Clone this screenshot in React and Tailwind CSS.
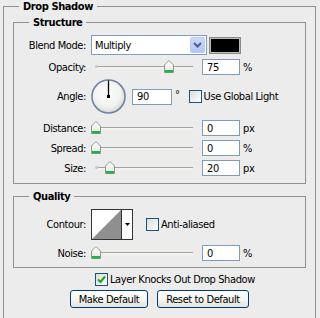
import React from "react";

function Thumb({ left }) {
  return (
    <svg
      className="absolute top-[1px]"
      style={{ left: `${left}px` }}
      width="10"
      height="13"
      viewBox="0 0 10 13"
    >
      <defs>
        <linearGradient id="tg" x1="0" y1="0" x2="0" y2="1">
          <stop offset="0" stopColor="#ffffff" />
          <stop offset="1" stopColor="#e6e6e0" />
        </linearGradient>
      </defs>
      <path d="M0.5 5 L5 0.5 L9.5 5 L9.5 12.5 L0.5 12.5 Z" fill="url(#tg)" stroke="#8e9a8e" />
      <rect x="1" y="10" width="8" height="2.5" fill="#22b14c" />
    </svg>
  );
}

function Slider({ thumb, dot }) {
  return (
    <div className="relative ml-[4px] w-[98px] h-[16px] flex items-center">
      <div className="w-full h-[3px] border-t border-[#a3a3a3] bg-[#f4f2ea] rounded-l-[2px]" />
      {dot && <div className="absolute left-0 top-[6px] w-[3px] h-[3px] rounded-full bg-[#c8c8c8]" />}
      <Thumb left={thumb} />
    </div>
  );
}

function Field({ value, w = "w-[38px]" }) {
  return (
    <div className={`${w} h-[16px] border border-[#7f9db9] bg-white pl-[4px] flex items-center`}>
      {value}
    </div>
  );
}

function Checkbox({ checked }) {
  return (
    <div className="w-[13px] h-[13px] border border-[#1c5180] bg-gradient-to-br from-[#dcdcd7] to-white flex items-center justify-center shrink-0">
      {checked && (
        <svg width="9" height="9" viewBox="0 0 9 9">
          <path d="M1 4.5 L3.5 7 L8 1.5" fill="none" stroke="#21a121" strokeWidth="2" />
        </svg>
      )}
    </div>
  );
}

function Label({ children }) {
  return <div className="w-[72px] mr-[5px] text-right shrink-0">{children}</div>;
}

function SliderRow({ label, thumb, dot, value, unit, mt = "mt-[4px]" }) {
  return (
    <div className={`${mt} h-[16px] flex items-center`}>
      <Label>{label}</Label>
      <Slider thumb={thumb} dot={dot} />
      <div className="ml-[9px]">
        <Field value={value} />
      </div>
      <div className="ml-[3px]">{unit}</div>
    </div>
  );
}

function Dial() {
  return (
    <svg width="35" height="35" viewBox="0 0 35 35">
      <defs>
        <radialGradient id="dg" cx="0.45" cy="0.4" r="0.6">
          <stop offset="0" stopColor="#ffffff" />
          <stop offset="0.7" stopColor="#f1f1ee" />
          <stop offset="1" stopColor="#d8d8d4" />
        </radialGradient>
      </defs>
      <circle cx="17.5" cy="17.5" r="16.5" fill="url(#dg)" stroke="#6f82a6" strokeWidth="1.6" />
      <line x1="17.5" y1="1.5" x2="17.5" y2="17.5" stroke="#000" strokeWidth="1.3" />
      <rect x="16" y="16" width="3" height="3" fill="#000" />
    </svg>
  );
}

function Contour() {
  return (
    <div className="w-[42px] h-[31px] border border-[#333] bg-white flex">
      <svg width="29" height="29" viewBox="0 0 29 29" className="shrink-0">
        <rect x="0" y="0" width="29" height="29" fill="#fff" />
        <path d="M0 29 L29 0 L29 29 Z" fill="#8f8f8f" />
      </svg>
      <div className="flex-1 border-l border-[#333] flex items-center justify-center">
        <svg width="5" height="3" viewBox="0 0 5 3">
          <path d="M0 0 L5 0 L2.5 3 Z" fill="#000" />
        </svg>
      </div>
    </div>
  );
}

function Button({ children, w }) {
  return (
    <div className={`${w} h-[18px] border border-[#003c74] rounded-[3px] bg-gradient-to-b from-white via-[#f6f6f3] to-[#e3e2db] flex items-center justify-center`}>
      {children}
    </div>
  );
}

export default function App() {
  return (
    <div className="w-[320px] h-[318px] overflow-hidden bg-[#ececec] text-[11px] leading-[13px] tracking-[-0.4px] text-black font-['DejaVu_Sans_Condensed','DejaVu_Sans',sans-serif] font-stretch-condensed pl-[3px]">
      <fieldset className="w-[313px] h-[340px] border border-[#919191] p-0 m-0">
        <legend className="ml-[15px] px-[4px] font-bold">Drop Shadow</legend>
        <div className="pl-[9px] pr-[9px]">
          <fieldset className="mt-[3px] border border-[#919191] p-0 pb-[7px]">
            <legend className="ml-[15px] px-[4px] font-bold">Structure</legend>
            <div className="mt-[6px] h-[20px] flex items-center">
              <Label>Blend Mode:</Label>
              <div className="w-[116px] h-[20px] border border-[#7f9db9] bg-white flex items-center">
                <div className="flex-1 pl-[3px]">Multiply</div>
                <div className="w-[15px] h-[16px] mr-[1px] rounded-[2px] bg-gradient-to-b from-[#cbdafc] to-[#b1c6f7] border border-[#b8caf5] flex items-center justify-center">
                  <svg width="9" height="6" viewBox="0 0 9 6">
                    <path d="M1 1 L4.5 4.5 L8 1" fill="none" stroke="#4d6185" strokeWidth="2" />
                  </svg>
                </div>
              </div>
              <div className="ml-[2px] w-[32px] h-[17px] border border-[#8a8a8a] p-[1px] bg-[#bdbdbd]">
                <div className="w-full h-full bg-black" />
              </div>
            </div>
            <SliderRow label="Opacity:" thumb={69} dot value="75" unit="%" />
            <div className="mt-[4px] h-[35px] flex items-center">
              <Label>Angle:</Label>
              <Dial />
              <div className="ml-[6px]">
                <Field value="90" w="w-[40px]" />
              </div>
              <div className="ml-[3px] self-start mt-[9px]">°</div>
              <div className="ml-[9px]">
                <Checkbox />
              </div>
              <div className="ml-[2px]">Use Global Light</div>
            </div>
            <SliderRow label="Distance:" thumb={-4} value="0" unit="px" mt="mt-[6px]" />
            <SliderRow label="Spread:" thumb={-4} value="0" unit="%" />
            <SliderRow label="Size:" thumb={10} dot value="20" unit="px" />
          </fieldset>

          <fieldset className="mt-[6px] border border-[#919191] p-0 pb-[6px]">
            <legend className="ml-[15px] px-[4px] font-bold">Quality</legend>
            <div className="mt-[6px] h-[31px] flex items-center">
              <Label>Contour:</Label>
              <Contour />
              <div className="ml-[13px]">
                <Checkbox />
              </div>
              <div className="ml-[2px]">Anti-aliased</div>
            </div>
            <SliderRow label="Noise:" thumb={-4} value="0" unit="%" mt="mt-[5px]" />
          </fieldset>

          <div className="mt-[5px] h-[13px] flex items-center pl-[82px]">
            <Checkbox checked />
            <div className="ml-[2px]">Layer Knocks Out Drop Shadow</div>
          </div>
          <div className="mt-[4px] flex pl-[57px]">
            <Button w="w-[78px]">Make Default</Button>
            <div className="ml-[9px]">
              <Button w="w-[92px]">Reset to Default</Button>
            </div>
          </div>
        </div>
      </fieldset>
    </div>
  );
}
